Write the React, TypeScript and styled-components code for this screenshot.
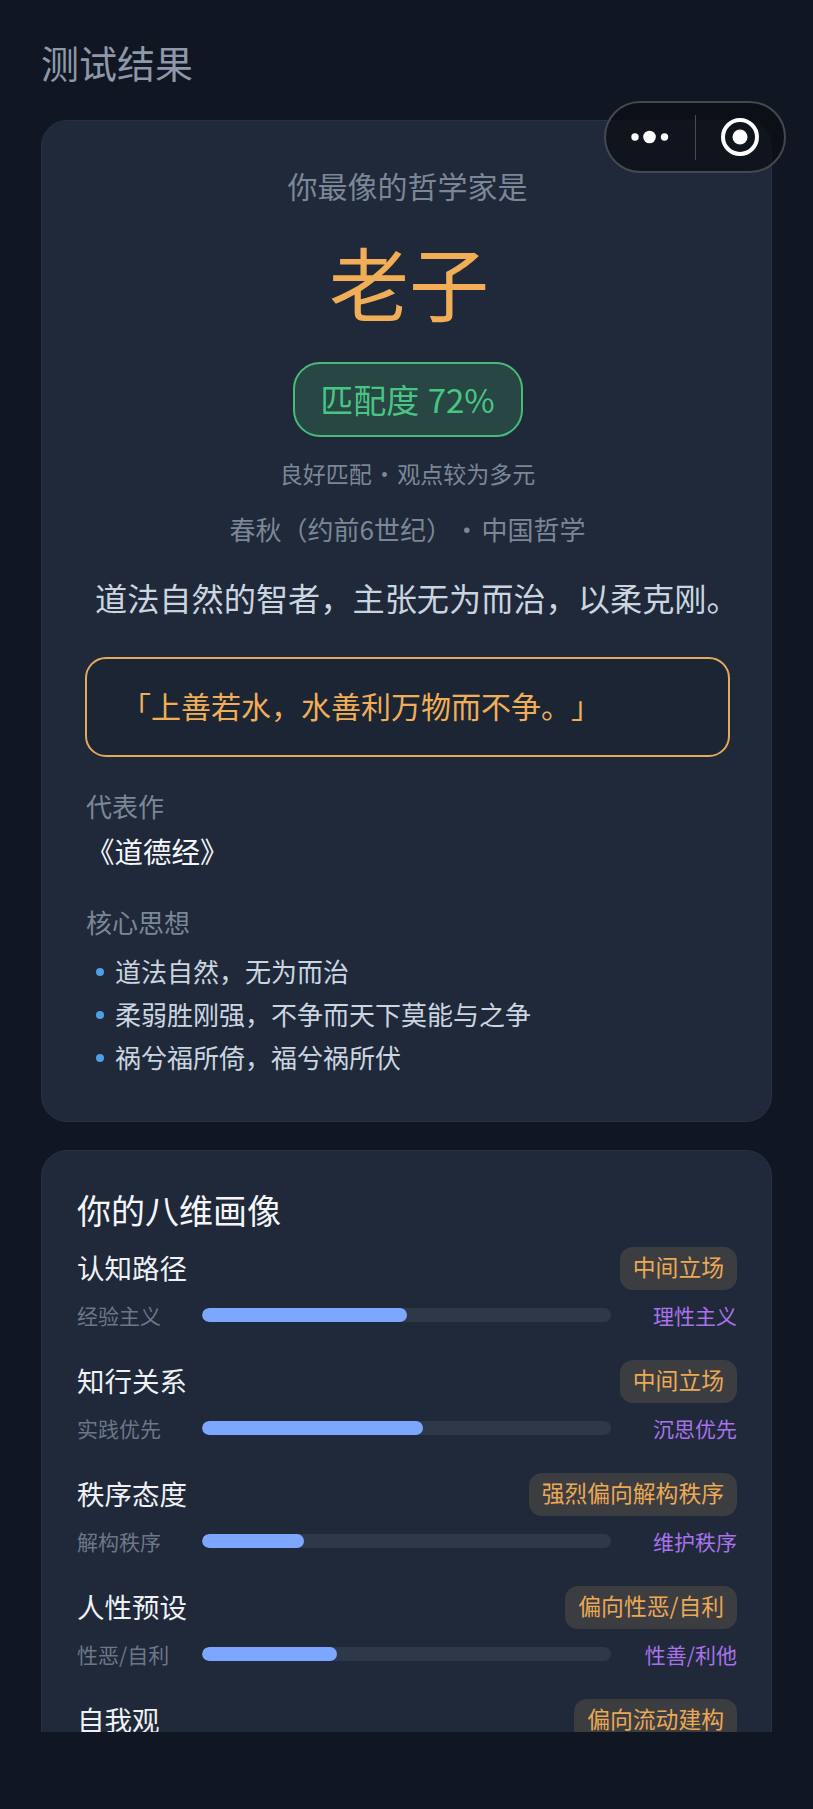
import styled, { createGlobalStyle } from "styled-components";

const GlobalStyle = createGlobalStyle`
  html, body {
    margin: 0;
    padding: 0;
    background: #101622;
  }
  * {
    box-sizing: border-box;
  }
  body {
    font-family: "Noto Sans CJK SC", "Noto Sans", sans-serif;
    text-spacing-trim: space-all;
  }
`;

const Page = styled.div`
  position: relative;
  width: 813px;
  height: 1809px;
  background: #101622;
  overflow: hidden;
`;

const Scroller = styled.main`
  height: 1732px;
  overflow: hidden;
  padding: 37px 41px 0 41px;
`;

const PageTitle = styled.h1`
  margin: 0 0 33px;
  font-size: 38px;
  line-height: 50px;
  font-weight: 400;
  color: #8d98a8;
`;

const Card = styled.section`
  background: #1f2939;
  border: 1px solid #273142;
  border-radius: 26px;
`;

const ResultCard = styled(Card)`
  padding: 44px 41px 43px 43px;
  margin-bottom: 28px;
  text-align: center;
`;

const Intro = styled.div`
  font-size: 30px;
  line-height: 40px;
  color: #7b8797;
`;

const Name = styled.div`
  margin-top: 25px;
  padding-left: 3px;
  font-size: 80px;
  line-height: 100px;
  color: #f1ae57;
`;

const MatchPill = styled.div`
  width: 230px;
  height: 75px;
  margin: 32px auto 0;
  padding-bottom: 2px;
  display: flex;
  align-items: center;
  justify-content: center;
  border: 2px solid #48bb78;
  border-radius: 27px;
  background: #284643;
  color: #48c585;
  font-size: 33px;
  word-spacing: 1px;
`;

const MatchNote = styled.div`
  margin-top: 20px;
  font-size: 23px;
  line-height: 32px;
  color: #7b8797;
  word-spacing: -4px;
`;

const Era = styled.div`
  margin-top: 22px;
  font-size: 26px;
  line-height: 36px;
  color: #7b8797;
  word-spacing: -4px;
`;

const Tagline = styled.div`
  margin-top: 28px;
  padding-left: 10px;
  font-size: 32.2px;
  line-height: 44px;
  color: #cbd5e0;
  text-align: left;
  white-space: nowrap;
`;

const Quote = styled.blockquote`
  margin: 38px 0 0;
  height: 100px;
  display: flex;
  align-items: center;
  padding: 0 0 5px 34px;
  border: 2px solid #e3a95d;
  border-radius: 21px;
  background: #1c2534;
  color: #f1ae57;
  font-size: 30px;
`;

const Section = styled.div<{ $gap: number }>`
  margin-top: ${(p) => p.$gap}px;
  padding-left: 1px;
  text-align: left;
`;

const SectionLabel = styled.div`
  font-size: 26px;
  line-height: 36px;
  color: #7b8797;
`;

const Work = styled.div`
  margin-top: 7px;
  font-size: 28.5px;
  line-height: 40px;
  color: #f4f6f9;
`;

const IdeaList = styled.ul`
  list-style: none;
  margin: 9px 0 0;
  padding: 0 0 0 29px;
`;

const Idea = styled.li`
  position: relative;
  font-size: 26px;
  line-height: 43px;
  color: #cbd5e0;

  &::before {
    content: "";
    position: absolute;
    left: -19px;
    top: 19px;
    width: 8px;
    height: 8px;
    border-radius: 50%;
    background: #4f9fe6;
  }
`;

const ProfileCard = styled(Card)`
  padding: 37px 34px 40px 35px;
`;

const ProfileTitle = styled.h2`
  margin: 0 0 15px;
  font-size: 34px;
  line-height: 44px;
  font-weight: 400;
  color: #f4f6f9;
`;

const Dimension = styled.div`
  margin-bottom: 32px;
`;

const DimensionHead = styled.div`
  display: flex;
  align-items: center;
  justify-content: space-between;
  height: 43px;
`;

const DimensionName = styled.div`
  padding-bottom: 4px;
  font-size: 27.5px;
  color: #eef1f5;
`;

const Badge = styled.div`
  height: 43px;
  padding: 0 13px 4px;
  display: flex;
  align-items: center;
  border-radius: 13px;
  background: #3c3d41;
  color: #eba955;
  font-size: 22.8px;
  white-space: nowrap;
`;

const BarRow = styled.div`
  margin-top: 10px;
  display: grid;
  grid-template-columns: 125px 1fr 126px;
  align-items: center;
  height: 28px;
`;

const PoleLeft = styled.div`
  font-size: 21px;
  color: #6b7789;
  white-space: nowrap;
`;

const PoleRight = styled.div`
  font-size: 21px;
  color: #a872ea;
  text-align: right;
  white-space: nowrap;
`;

const Track = styled.div`
  height: 14px;
  border-radius: 7px;
  background: #2d3849;
  overflow: hidden;
`;

const Fill = styled.div`
  height: 100%;
  border-radius: 7px;
  background: #7da6ff;
`;

const Capsule = styled.div`
  position: absolute;
  left: 604px;
  top: 101px;
  width: 182px;
  height: 72px;
  display: flex;
  align-items: center;
  border: 2px solid #44484f;
  border-radius: 36px;
  background: rgba(10, 13, 18, 0.72);
`;

const CapsulePart = styled.div`
  flex: 1;
  display: flex;
  align-items: center;
  justify-content: center;
`;

const CapsuleDivider = styled.div`
  width: 1px;
  height: 45px;
  background: #4a4d53;
`;

type Dim = {
  name: string;
  badge: string;
  poles?: { left: string; right: string; value: number };
};

// last row runs under the bottom edge, only its head is visible
const dimensions: Dim[] = [
  { name: "认知路径", badge: "中间立场", poles: { left: "经验主义", right: "理性主义", value: 50 } },
  { name: "知行关系", badge: "中间立场", poles: { left: "实践优先", right: "沉思优先", value: 54 } },
  { name: "秩序态度", badge: "强烈偏向解构秩序", poles: { left: "解构秩序", right: "维护秩序", value: 25 } },
  { name: "人性预设", badge: "偏向性恶/自利", poles: { left: "性恶/自利", right: "性善/利他", value: 33 } },
  { name: "自我观", badge: "偏向流动建构" },
];

const ideas = ["道法自然，无为而治", "柔弱胜刚强，不争而天下莫能与之争", "祸兮福所倚，福兮祸所伏"];

const MoreIcon = () => (
  <svg width="48" height="14" viewBox="0 0 48 14" fill="#fff">
    <circle cx="9" cy="7" r="3.7" />
    <circle cx="23.5" cy="7" r="6.3" />
    <circle cx="38.5" cy="7" r="3.7" />
  </svg>
);

const RecordIcon = () => (
  <svg width="40" height="40" viewBox="0 0 40 40" fill="none">
    <circle cx="20" cy="20" r="17" stroke="#fff" strokeWidth="4" />
    <circle cx="20" cy="20" r="7.5" fill="#fff" />
  </svg>
);

export default function App() {
  return (
    <Page>
      <GlobalStyle />
      <Scroller>
        <PageTitle>测试结果</PageTitle>
        <ResultCard>
          <Intro>你最像的哲学家是</Intro>
          <Name>老子</Name>
          <MatchPill>匹配度 72%</MatchPill>
          <MatchNote>良好匹配 · 观点较为多元</MatchNote>
          <Era>春秋（约前6世纪） · 中国哲学</Era>
          <Tagline>道法自然的智者，主张无为而治，以柔克刚。</Tagline>
          <Quote>「上善若水，水善利万物而不争。」</Quote>
          <Section $gap={31}>
            <SectionLabel>代表作</SectionLabel>
            <Work>《道德经》</Work>
          </Section>
          <Section $gap={33}>
            <SectionLabel>核心思想</SectionLabel>
            <IdeaList>
              {ideas.map((idea) => (
                <Idea key={idea}>{idea}</Idea>
              ))}
            </IdeaList>
          </Section>
        </ResultCard>
        <ProfileCard>
          <ProfileTitle>你的八维画像</ProfileTitle>
          {dimensions.map((d) => (
            <Dimension key={d.name}>
              <DimensionHead>
                <DimensionName>{d.name}</DimensionName>
                <Badge>{d.badge}</Badge>
              </DimensionHead>
              {d.poles && (
                <BarRow>
                  <PoleLeft>{d.poles.left}</PoleLeft>
                  <Track>
                    <Fill style={{ width: `${d.poles.value}%` }} />
                  </Track>
                  <PoleRight>{d.poles.right}</PoleRight>
                </BarRow>
              )}
            </Dimension>
          ))}
        </ProfileCard>
      </Scroller>
      <Capsule>
        <CapsulePart>
          <MoreIcon />
        </CapsulePart>
        <CapsuleDivider />
        <CapsulePart>
          <RecordIcon />
        </CapsulePart>
      </Capsule>
    </Page>
  );
}
